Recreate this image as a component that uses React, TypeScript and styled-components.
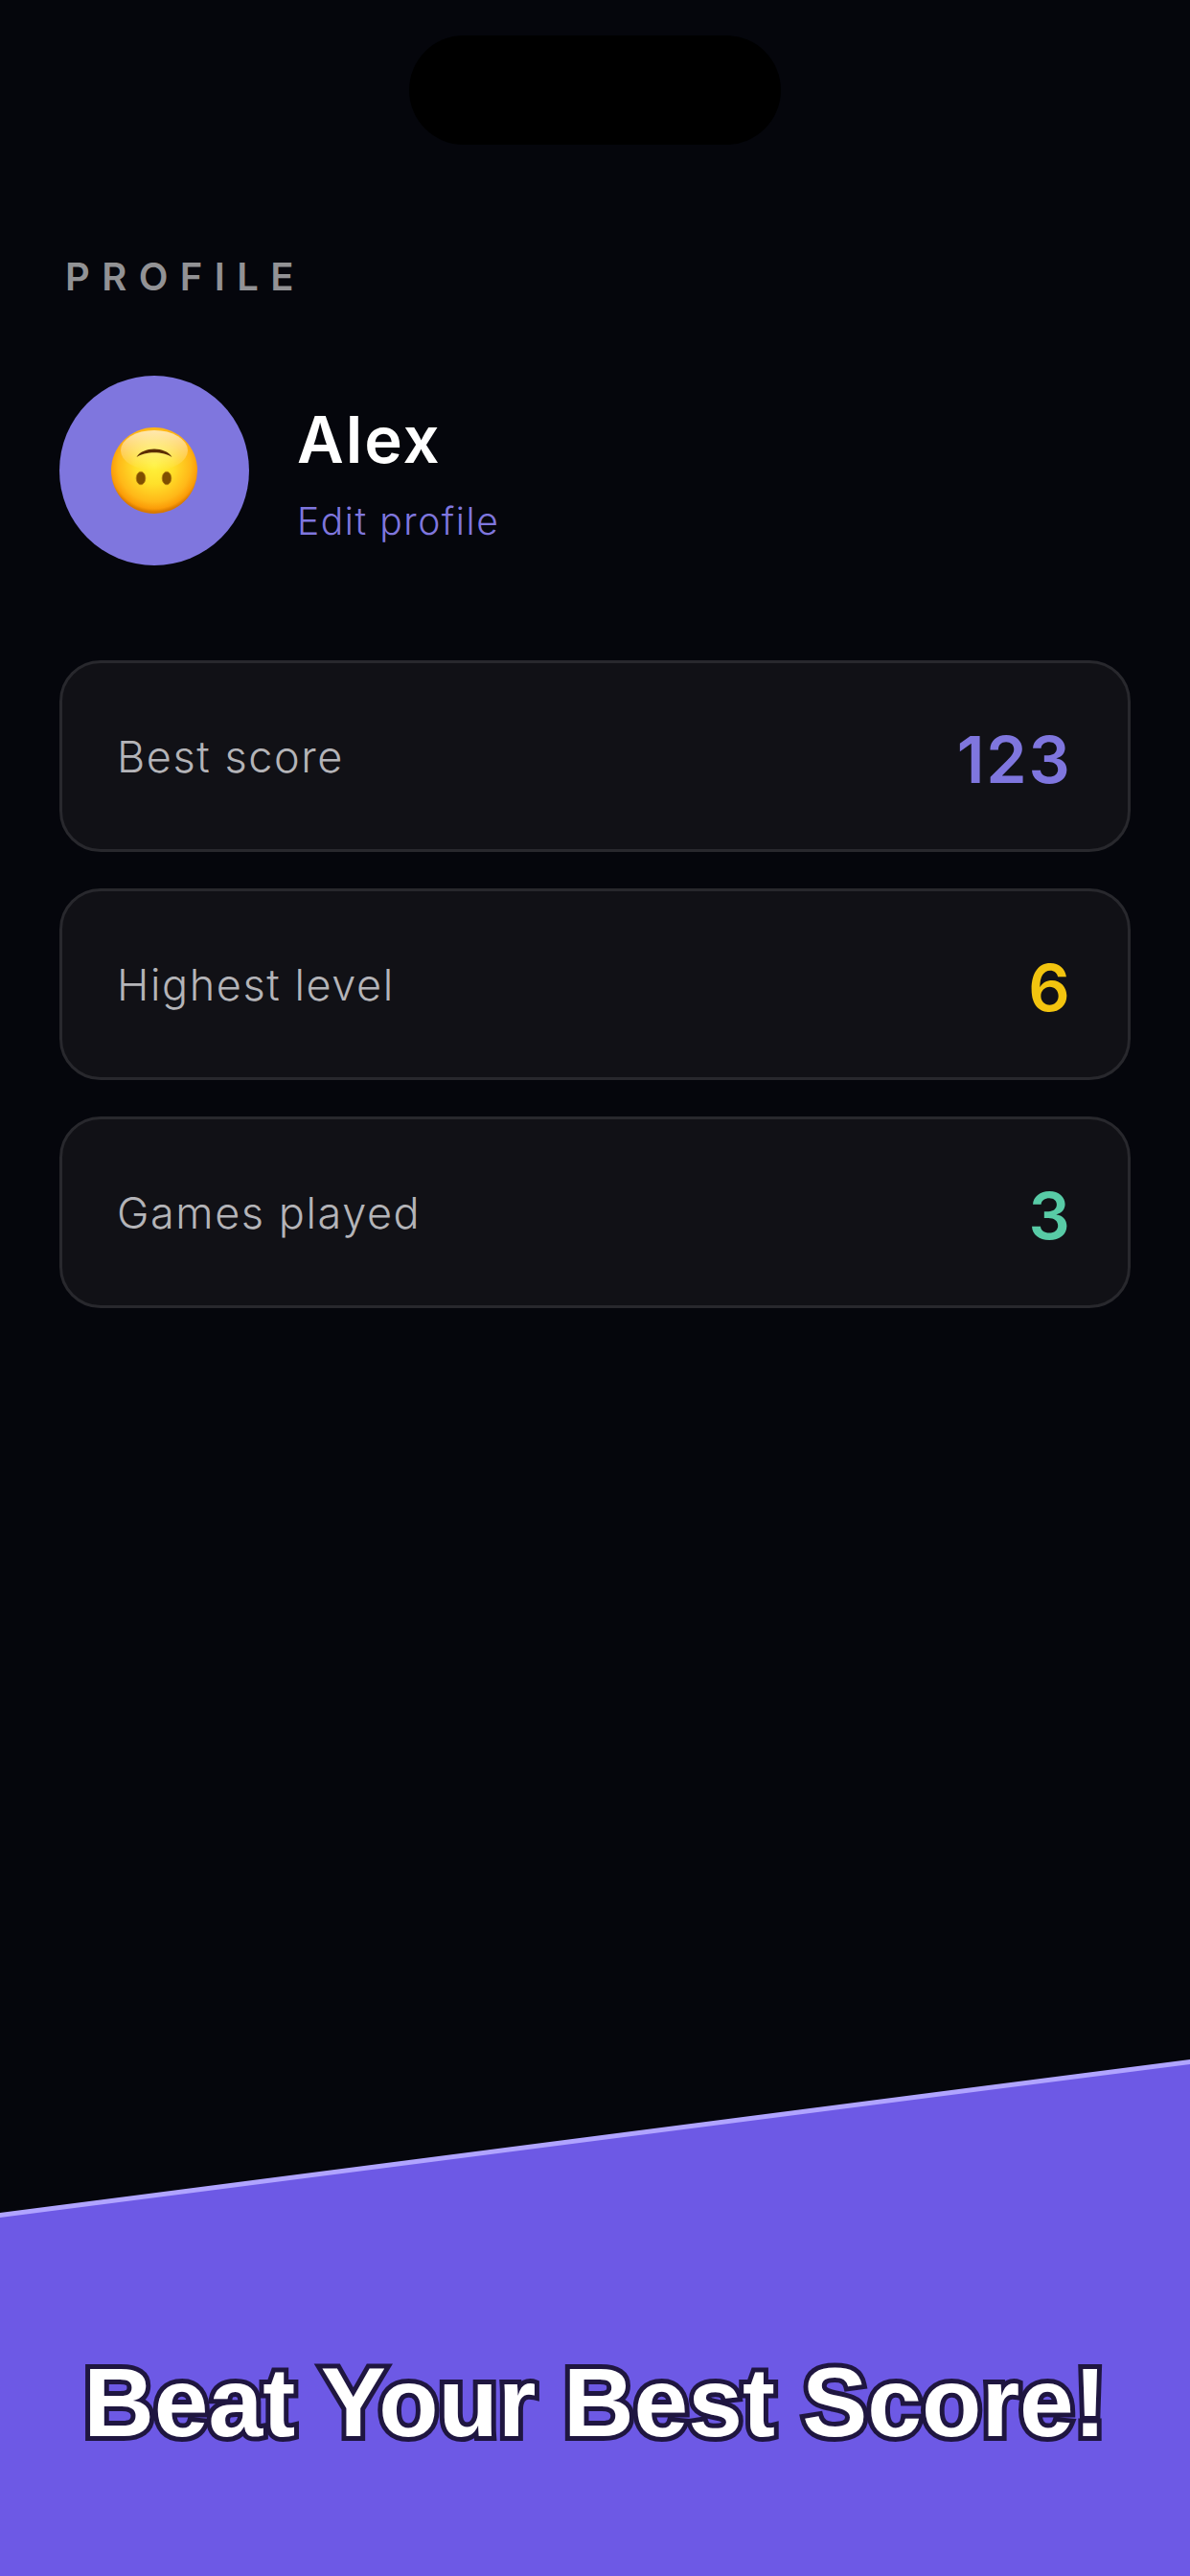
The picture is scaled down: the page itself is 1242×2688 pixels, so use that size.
import React from "react";
import styled, { createGlobalStyle } from "styled-components";

const stats = [
	{ label: "Best score", value: "123", color: "#7f76de" },
	{ label: "Highest level", value: "6", color: "#f2c40f" },
	{ label: "Games played", value: "3", color: "#58cba6" },
];

function UpsideDownFace() {
	return (
		<svg width="90" height="90" viewBox="0 0 90 90">
			<defs>
				<radialGradient id="face" cx="50%" cy="44%" r="54%">
					<stop offset="0%" stopColor="#fff23c" />
					<stop offset="40%" stopColor="#ffe02a" />
					<stop offset="78%" stopColor="#ffb818" />
					<stop offset="93%" stopColor="#fb9c08" />
					<stop offset="100%" stopColor="#d97a00" />
				</radialGradient>
				<linearGradient id="shine" x1="0" y1="0" x2="0" y2="1">
					<stop offset="0%" stopColor="#fff" stopOpacity="0.65" />
					<stop offset="100%" stopColor="#fff" stopOpacity="0" />
				</linearGradient>
			</defs>
			<circle cx="45" cy="45" r="45" fill="url(#face)" />
			<ellipse cx="45" cy="24" rx="35" ry="21" fill="url(#shine)" />
			<path d="M26.5 31 C33 19.5 57 19.5 63.5 31 C55 24.5 35 24.5 26.5 31 Z" fill="#5b2d00" />
			<ellipse cx="31" cy="53" rx="4.8" ry="6.8" fill="#7f4f00" stroke="#b07a10" strokeWidth="0.8" />
			<ellipse cx="58" cy="53" rx="4.8" ry="6.8" fill="#7f4f00" stroke="#b07a10" strokeWidth="0.8" />
		</svg>
	);
}

export default function App() {
	return (
		<>
			<GlobalStyle />
			<Page>
				<Notch />
				<Content>
					<Title>PROFILE</Title>
					<ProfileRow>
						<Avatar>
							<UpsideDownFace />
						</Avatar>
						<ProfileInfo>
							<Name>Alex</Name>
							<EditLink>Edit profile</EditLink>
						</ProfileInfo>
					</ProfileRow>
					<StatList>
						{stats.map((stat) => (
							<StatCard key={stat.label}>
								<StatLabel>{stat.label}</StatLabel>
								<StatValue $color={stat.color}>{stat.value}</StatValue>
							</StatCard>
						))}
					</StatList>
				</Content>
				<Banner>
					<BannerFill>
						<Headline>Beat Your Best Score!</Headline>
					</BannerFill>
				</Banner>
			</Page>
		</>
	);
}

const GlobalStyle = createGlobalStyle`
	html, body {
		margin: 0;
		padding: 0;
		background: #05060c;
	}
`;

const Page = styled.div`
	width: 1242px;
	height: 2688px;
	display: flex;
	flex-direction: column;
	overflow: hidden;
	background: #05060c;
	font-family: Inter, "Liberation Sans", sans-serif;
`;

const Notch = styled.div`
	flex: none;
	width: 388px;
	height: 114px;
	margin: 37px auto 0;
	border-radius: 57px;
	background: #000;
`;

const Content = styled.div`
	flex: 1;
	padding: 114px 62px 0;
`;

const Title = styled.h1`
	margin: 0 0 0 6px;
	font-size: 40px;
	line-height: 47px;
	font-weight: 600;
	letter-spacing: 0.31em;
	color: #929295;
`;

const ProfileRow = styled.div`
	display: flex;
	align-items: center;
	gap: 50px;
	margin-top: 80px;
`;

const Avatar = styled.div`
	width: 198px;
	height: 198px;
	border-radius: 50%;
	background: #7f76de;
	display: flex;
	justify-content: center;
	align-items: center;
`;

const ProfileInfo = styled.div`
	display: flex;
	flex-direction: column;
	gap: 21px;
	padding-top: 3px;
`;

const Name = styled.div`
	font-size: 67px;
	line-height: 80px;
	font-weight: 600;
	letter-spacing: 0.03em;
	color: #fff;
`;

const EditLink = styled.div`
	font-size: 39px;
	line-height: 47px;
	font-weight: 350;
	letter-spacing: 0.04em;
	color: #7f76de;
`;

const StatList = styled.div`
	display: flex;
	flex-direction: column;
	gap: 38px;
	margin-top: 99px;
`;

const StatCard = styled.div`
	box-sizing: border-box;
	height: 200px;
	padding: 0 60px 0 57px;
	display: flex;
	justify-content: space-between;
	align-items: center;
	border: 3px solid #28282d;
	border-radius: 43px;
	background: #111116;
`;

const StatLabel = styled.span`
	padding-top: 1px;
	font-size: 45px;
	font-weight: 350;
	letter-spacing: 0.035em;
	color: #b4b4b8;
`;

const StatValue = styled.span<{ $color: string }>`
	padding-top: 5px;
	margin-right: -0.02em;
	font-size: 68px;
	font-weight: 600;
	letter-spacing: 0.025em;
	color: ${(p) => p.$color};
`;

const Banner = styled.div`
	flex: none;
	height: 539px;
	background: #b0a4ff;
	clip-path: polygon(0 160px, 100% 0, 100% 100%, 0 100%);
`;

const BannerFill = styled.div`
	height: 100%;
	box-sizing: border-box;
	padding-top: 296px;
	background: #6d59e5;
	clip-path: polygon(0 165px, 100% 5px, 100% 100%, 0 100%);
	text-align: center;
`;

const Headline = styled.div`
	font-family: "Liberation Sans", Arial, sans-serif;
	font-size: 102px;
	line-height: 124px;
	font-weight: 700;
	color: #fff;
	white-space: nowrap;
	-webkit-text-stroke: 10px #1f1640;
	paint-order: stroke fill;
`;
